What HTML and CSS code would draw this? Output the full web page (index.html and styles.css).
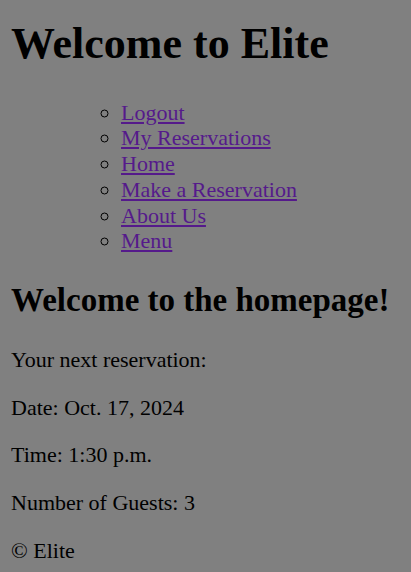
FILE: index.html
```html
<!DOCTYPE html>
<html lang="en">
<head>
<meta charset="utf-8">
<title>Elite</title>
<link rel="stylesheet" href="styles.css">
</head>
<body>
<header class="site-header">
  <h1 class="site-title">Welcome to Elite</h1>
  <nav class="site-nav">
    <ul class="nav-outer">
      <li class="nav-wrap">
        <ul class="nav-list">
          <li><a class="nav-link" href="#">Logout</a></li>
          <li><a class="nav-link" href="#">My Reservations</a></li>
          <li><a class="nav-link" href="#">Home</a></li>
          <li><a class="nav-link" href="#">Make a Reservation</a></li>
          <li><a class="nav-link" href="#">About Us</a></li>
          <li><a class="nav-link" href="#">Menu</a></li>
        </ul>
      </li>
    </ul>
  </nav>
</header>
<main class="content">
  <h2 class="page-title">Welcome to the homepage!</h2>
  <p class="text">Your next reservation:</p>
  <p class="text">Date: Oct. 17, 2024</p>
  <p class="text">Time: 1:30 p.m.</p>
  <p class="text">Number of Guests: 3</p>
</main>
<footer class="site-footer">
  <p class="text">&copy; Elite</p>
</footer>
</body>
</html>
```

FILE: styles.css
```css
html {
  background: #808080;
}
body {
  margin: 18px 11px;
  font-family: "Liberation Serif", "Times New Roman", serif;
  font-size: 22px;
  line-height: 25.8px;
  color: #000;
}
.site-title {
  font-size: 44px;
  line-height: 51px;
  font-weight: bold;
  margin: 0 0 30.5px;
}
.nav-outer {
  list-style: none;
  margin: 0;
  padding-left: 55px;
}
.nav-list {
  list-style: circle;
  margin: 0;
  padding-left: 55px;
}
.nav-link {
  color: #551a8b;
  text-decoration: underline;
}
.page-title {
  font-size: 33px;
  line-height: 38px;
  font-weight: bold;
  margin: 27px 0 28px;
}
.text {
  margin: 21.8px 0;
}
```
